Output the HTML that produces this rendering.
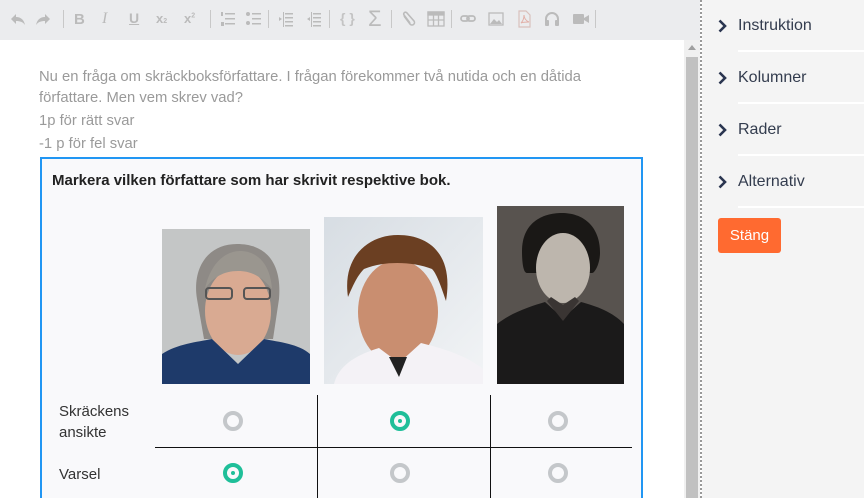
<!DOCTYPE html>
<html><head><meta charset="utf-8"><style>
*{margin:0;padding:0;box-sizing:border-box}
html,body{width:864px;height:498px;overflow:hidden}
body{background:#fff;font-family:"Liberation Sans",sans-serif;position:relative}
.tb{position:absolute;left:0;top:0;width:700px;height:40px;background:#ebecee}
.ic{position:absolute;top:10px;width:18px;height:18px}
.sep{position:absolute;top:10px;width:1px;height:18px;background:#c8c8c8}
.sb{position:absolute;left:684px;top:40px;width:16px;height:458px;background:#f0f0f0}
.th{position:absolute;left:686px;top:57px;width:12px;height:441px;background:#c1c1c1}
.arr{position:absolute;left:688px;top:45px;width:0;height:0;border-left:4px solid transparent;border-right:4px solid transparent;border-bottom:5px solid #a0a0a0}
.dot{position:absolute;left:700px;top:0;width:2px;height:498px;border-left:2px dotted #999}
.rp{position:absolute;left:702px;top:0;width:162px;height:498px;background:#f4f4f4}
.it{position:absolute;left:36px;width:126px;height:52px;border-bottom:2px solid #fff;font-size:16px;color:#333c4e;line-height:52px}
.it svg{position:absolute;left:-20px;top:19px}
.btn{position:absolute;left:16px;top:218px;width:63px;height:35px;background:#ff6a30;border-radius:3px;color:#fff;font-size:15px;text-align:center;line-height:35px}
.p{position:absolute;left:39px;color:#9a9a9a;font-size:14.8px;white-space:nowrap}
.box{position:absolute;left:40px;top:157px;width:603px;height:341px;border:2px solid #2196f3;border-bottom:none;background:#f9f9fb}
.q{position:absolute;left:10px;top:13px;font-weight:bold;font-size:15px;color:#222}
.r{position:absolute;width:20px;height:20px;border-radius:50%;border:4px solid #c4c7ca}
.r.on{border-color:#1fbf99}
.r.on:before{content:"";position:absolute;left:4px;top:4px;width:4px;height:4px;border-radius:50%;background:#1fbf99}
.lbl{position:absolute;left:17px;font-size:15px;color:#333;line-height:21px}
.vl{position:absolute;top:236px;width:1px;height:103px;background:#111}
.hl{position:absolute;left:113px;top:288px;width:477px;height:1px;background:#111}
</style></head><body>
<div class="tb">
<svg class="ic" style="left:9px" viewBox="0 0 18 18"><path d="M7 4L2 9l5 5V11c4 0 7 1 9 4-1-5-4-8-9-8z" fill="#bbb"/></svg>
<svg class="ic" style="left:34px" viewBox="0 0 18 18"><path d="M11 4l5 5-5 5V11c-4 0-7 1-9 4 1-5 4-8 9-8z" fill="#bbb"/></svg>
<div class="sep" style="left:63px"></div>
<div class="ic" style="left:74px;font:bold 15px 'Liberation Sans';color:#bbb;top:11px">B</div>
<div class="ic" style="left:102px;font:italic 16px 'Liberation Serif';color:#bbb;top:10px">I</div>
<div class="ic" style="left:129px;font:bold 14px 'Liberation Sans';color:#bbb;top:10px;text-decoration:underline">U</div>
<div class="ic" style="left:156px;font:bold 13px 'Liberation Sans';color:#bbb;top:11px">x<span style="font-size:7px">2</span></div>
<div class="ic" style="left:184px;font:bold 13px 'Liberation Sans';color:#bbb;top:11px">x<sup style="font-size:7px">2</sup></div>
<div class="sep" style="left:210px"></div>
<svg class="ic" style="left:219px" viewBox="0 0 18 18" fill="#bbb"><rect x="6" y="3" width="10" height="1.5"/><rect x="6" y="8" width="10" height="1.5"/><rect x="6" y="13" width="10" height="1.5"/><rect x="2" y="2" width="2" height="4"/><rect x="2" y="12" width="3" height="4"/></svg>
<svg class="ic" style="left:245px" viewBox="0 0 18 18" fill="#bbb"><rect x="7" y="3" width="9" height="1.5"/><rect x="7" y="8" width="9" height="1.5"/><rect x="7" y="13" width="9" height="1.5"/><circle cx="3" cy="4" r="2"/><circle cx="3" cy="13" r="2"/></svg>
<div class="sep" style="left:268px"></div>
<svg class="ic" style="left:277px" viewBox="0 0 18 18" fill="#bbb"><rect x="8" y="3" width="8" height="1.5"/><rect x="8" y="7" width="8" height="1.5"/><rect x="8" y="11" width="8" height="1.5"/><rect x="8" y="15" width="8" height="1.5"/><rect x="6" y="2" width="1" height="15"/><path d="M5 9L2 7v4z"/></svg>
<svg class="ic" style="left:305px" viewBox="0 0 18 18" fill="#bbb"><rect x="8" y="3" width="8" height="1.5"/><rect x="8" y="7" width="8" height="1.5"/><rect x="8" y="11" width="8" height="1.5"/><rect x="8" y="15" width="8" height="1.5"/><rect x="6" y="2" width="1" height="15"/><path d="M2 9l3-2v4z"/></svg>
<div class="sep" style="left:329px"></div>
<div class="ic" style="left:340px;font:bold 14px 'Liberation Sans';color:#c4c4c4;top:10px;width:24px">{ }</div>
<div class="ic" style="left:368px;font:22px 'Liberation Sans';color:#bbb;top:6px">&#931;</div>
<div class="sep" style="left:391px"></div>
<svg class="ic" style="left:399px" viewBox="0 0 18 18"><path d="M5 6l6 8a2.5 2.5 0 004-3L8 3a1.6 1.6 0 00-3 2l6 8" fill="none" stroke="#bbb" stroke-width="1.6"/></svg>
<svg class="ic" style="left:427px" viewBox="0 0 18 18" fill="none" stroke="#bbb" stroke-width="1.3"><rect x="1" y="2" width="16" height="14"/><rect x="1" y="2" width="16" height="3" fill="#bbb"/><path d="M1 10h16M6.5 5v11M11.5 5v11"/></svg>
<div class="sep" style="left:451px"></div>
<svg class="ic" style="left:459px" viewBox="0 0 18 18" fill="none" stroke="#bbb" stroke-width="1.8"><rect x="2" y="6" width="8" height="5" rx="2.5"/><rect x="8" y="6" width="8" height="5" rx="2.5"/></svg>
<svg class="ic" style="left:487px" viewBox="0 0 18 18"><rect x="2" y="3" width="14" height="12" fill="none" stroke="#bbb" stroke-width="1.3"/><path d="M3 14l4-5 3 3 2-2 3 4z" fill="#bbb"/></svg>
<svg class="ic" style="left:515px" viewBox="0 0 18 18"><path d="M4 1h7l4 4v12H4z" fill="none" stroke="#d9c0bc" stroke-width="1.2"/><path d="M6 13c2-2 3-5 3-8 0 3 2 6 5 7-3 0-6 0-8 1z" fill="none" stroke="#e2b0a8"/></svg>
<svg class="ic" style="left:543px" viewBox="0 0 18 18"><path d="M3 12V9a6 6 0 0112 0v3" fill="none" stroke="#bbb" stroke-width="2"/><rect x="2" y="10" width="4" height="6" rx="1" fill="#bbb"/><rect x="12" y="10" width="4" height="6" rx="1" fill="#bbb"/></svg>
<svg class="ic" style="left:572px" viewBox="0 0 18 18" fill="#bbb"><rect x="1" y="4" width="11" height="10" rx="1"/><path d="M12 8l5-3v8l-5-3z"/></svg>
<div class="sep" style="left:595px"></div>
</div>

<div class="p" style="top:69px">Nu en fråga om skräckboksförfattare. I frågan förekommer två nutida och en dåtida</div>
<div class="p" style="top:90px">författare. Men vem skrev vad?</div>
<div class="p" style="top:113px">1p för rätt svar</div>
<div class="p" style="top:136px">-1 p för fel svar</div>

<div class="box">
<div class="q">Markera vilken författare som har skrivit respektive bok.</div>
<svg style="position:absolute;left:120px;top:70px" width="148" height="155" viewBox="0 0 148 155">
<rect width="148" height="155" fill="#c4c6c6"/>
<path d="M35 70c-5-30 10-55 40-55s45 20 42 55l-6 40H42z" fill="#8e8a86"/>
<ellipse cx="76" cy="82" rx="33" ry="44" fill="#d9aa92"/>
<path d="M43 60c5-25 20-38 35-38s30 10 32 38c-10-12-20-18-34-18s-25 6-33 18z" fill="#9a968f"/>
<rect x="44" y="59" width="26" height="11" rx="3" fill="none" stroke="#555" stroke-width="2"/><rect x="82" y="59" width="26" height="11" rx="3" fill="none" stroke="#555" stroke-width="2"/>
<path d="M0 155v-30c15-10 35-12 50-15l26 25 26-25c15 3 35 5 46 15v30z" fill="#1e3a6a"/>
</svg>
<svg style="position:absolute;left:282px;top:58px" width="159" height="167" viewBox="0 0 159 167">
<defs><linearGradient id="g2" x1="0" y1="0" x2="1" y2="1"><stop offset="0" stop-color="#d7dde3"/><stop offset="1" stop-color="#f2f4f6"/></linearGradient></defs>
<rect width="159" height="167" fill="url(#g2)"/>
<ellipse cx="74" cy="95" rx="40" ry="52" fill="#c98e70"/>
<path d="M24 80c-6-40 20-62 50-62s56 18 48 66c-6-18-10-28-14-32-20-8-50-8-68 0-6 6-10 14-16 28z" fill="#6b3f22"/>
<path d="M10 167c5-20 25-30 45-36l20 15 22-20c20 5 45 12 62 26v15z" fill="#f4f2f6"/>
<path d="M65 140l10 20 8-20z" fill="#222"/>
</svg>
<svg style="position:absolute;left:455px;top:47px" width="127" height="178" viewBox="0 0 127 178">
<rect width="127" height="178" fill="#58534f"/>
<path d="M25 45c0-28 20-38 40-38s38 12 38 40c0 10-5 20-8 20H30c-4 0-5-12-5-22z" fill="#1a1816"/>
<ellipse cx="66" cy="62" rx="27" ry="35" fill="#bdb6ad"/>
<path d="M0 178v-60c15-12 35-18 48-22l18 16 18-16c15 4 32 10 43 22v60z" fill="#1b1a1a"/>
<path d="M50 95l16 20 16-20-4-4-12 8-12-8z" fill="#3a3533"/>
</svg>
<div class="lbl" style="top:242px">Skräckens<br>ansikte</div>
<div class="lbl" style="top:305px">Varsel</div>
<div class="vl" style="left:275px"></div>
<div class="vl" style="left:448px"></div>
<div class="hl"></div>
<div class="r" style="left:181px;top:252px"></div>
<div class="r on" style="left:348px;top:252px"></div>
<div class="r" style="left:506px;top:252px"></div>
<div class="r on" style="left:181px;top:304px"></div>
<div class="r" style="left:348px;top:304px"></div>
<div class="r" style="left:506px;top:304px"></div>
</div>

<div class="sb"></div><div class="th"></div><div class="arr"></div>
<div class="dot"></div>
<div class="rp">
<div class="it" style="top:0"><svg width="9" height="14" viewBox="0 0 9 14"><path d="M1.5 1.5l5.5 5.5-5.5 5.5" fill="none" stroke="#2a3550" stroke-width="2.6"/></svg>Instruktion</div>
<div class="it" style="top:52px"><svg width="9" height="14" viewBox="0 0 9 14"><path d="M1.5 1.5l5.5 5.5-5.5 5.5" fill="none" stroke="#2a3550" stroke-width="2.6"/></svg>Kolumner</div>
<div class="it" style="top:104px"><svg width="9" height="14" viewBox="0 0 9 14"><path d="M1.5 1.5l5.5 5.5-5.5 5.5" fill="none" stroke="#2a3550" stroke-width="2.6"/></svg>Rader</div>
<div class="it" style="top:156px"><svg width="9" height="14" viewBox="0 0 9 14"><path d="M1.5 1.5l5.5 5.5-5.5 5.5" fill="none" stroke="#2a3550" stroke-width="2.6"/></svg>Alternativ</div>
<div class="btn">Stäng</div>
</div>
</body></html>
